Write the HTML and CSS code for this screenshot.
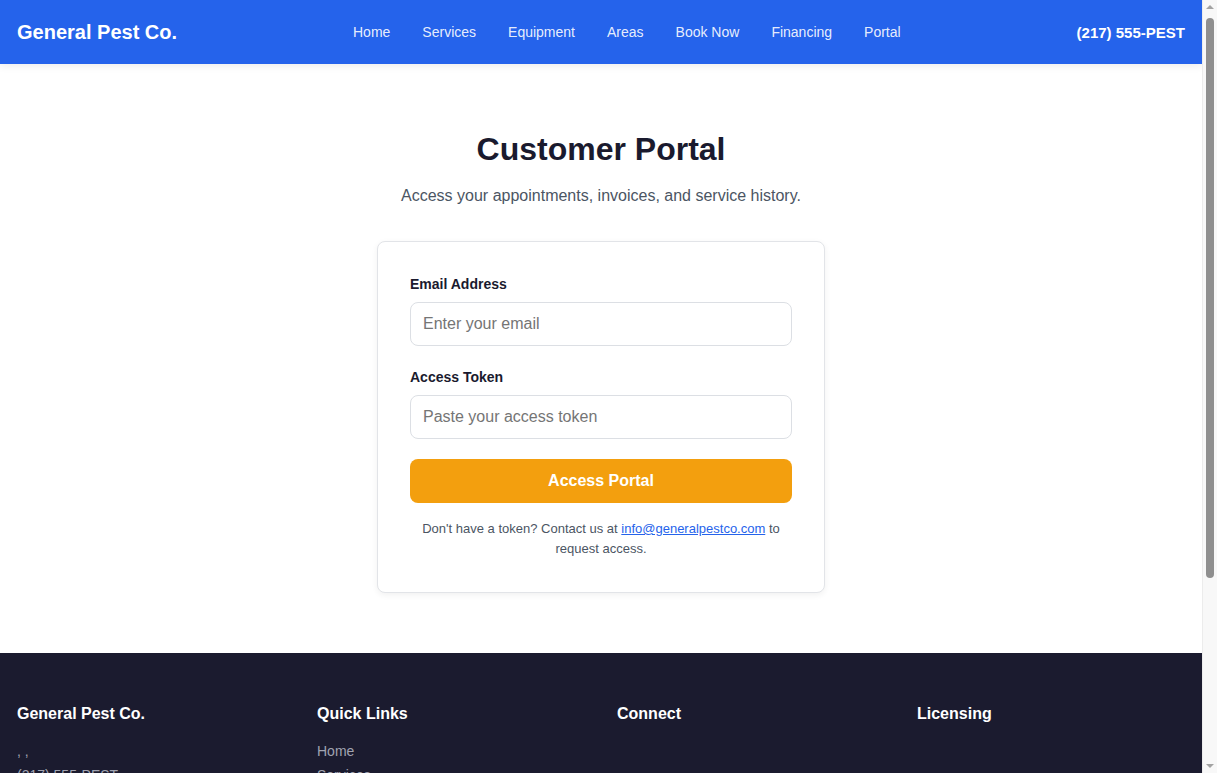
FILE: index.html
```html
<!DOCTYPE html>
<html lang="en">
<head>
<meta charset="utf-8">
<title>Customer Portal - General Pest Co.</title>
<link rel="stylesheet" href="styles.css">
</head>
<body>
<header class="site-header">
  <a class="logo" href="#">General Pest Co.</a>
  <nav class="main-nav">
    <a href="#">Home</a>
    <a href="#">Services</a>
    <a href="#">Equipment</a>
    <a href="#">Areas</a>
    <a href="#">Book Now</a>
    <a href="#">Financing</a>
    <a href="#">Portal</a>
  </nav>
  <a class="phone" href="#">(217) 555-PEST</a>
</header>

<main class="portal">
  <h1 class="portal-title">Customer Portal</h1>
  <p class="portal-sub">Access your appointments, invoices, and service history.</p>
  <form class="card">
    <div class="field">
      <label class="field-label" for="email">Email Address</label>
      <input class="field-input" id="email" type="email" placeholder="Enter your email">
    </div>
    <div class="field field-last">
      <label class="field-label" for="token">Access Token</label>
      <input class="field-input" id="token" type="text" placeholder="Paste your access token">
    </div>
    <button class="btn-primary" type="button">Access Portal</button>
    <p class="help">Don't have a token? Contact us at <a href="#">info@generalpestco.com</a> to request access.</p>
  </form>
</main>

<footer class="site-footer">
  <div class="footer-grid">
    <div class="footer-col">
      <h3 class="footer-head">General Pest Co.</h3>
      <p class="footer-text">, ,</p>
      <p class="footer-text">(217) 555-PEST</p>
      <p class="footer-text">info@generalpestco.com</p>
    </div>
    <div class="footer-col">
      <h3 class="footer-head">Quick Links</h3>
      <a class="footer-link" href="#">Home</a>
      <a class="footer-link" href="#">Services</a>
      <a class="footer-link" href="#">Book Now</a>
      <a class="footer-link" href="#">Portal</a>
    </div>
    <div class="footer-col">
      <h3 class="footer-head">Connect</h3>
    </div>
    <div class="footer-col">
      <h3 class="footer-head">Licensing</h3>
    </div>
  </div>
  <div class="footer-bottom">&copy; 2024 General Pest Co. All rights reserved.</div>
</footer>

<div class="scrollbar" aria-hidden="true">
  <span class="sb-arrow sb-up"></span>
  <span class="sb-thumb"></span>
  <span class="sb-arrow sb-down"></span>
</div>
</body>
</html>
```

FILE: styles.css
```css
* { box-sizing: border-box; }
html, body { margin: 0; padding: 0; }
body {
  font-family: "Liberation Sans", Arial, sans-serif;
  color: #1a1a2e;
  background: #fff;
  margin-right: 15px;
}
a { text-decoration: none; color: inherit; }

.site-header {
  height: 64px;
  background: #2563eb;
  display: flex;
  align-items: center;
  justify-content: space-between;
  padding: 0 17px;
  box-shadow: 0 2px 8px rgba(0,0,0,0.08);
  position: relative;
}
.logo {
  color: #fff;
  font-size: 20px;
  font-weight: 700;
}
.main-nav {
  display: flex;
  gap: 32px;
}
.main-nav a {
  color: rgba(255,255,255,0.9);
  font-size: 14px;
}
.phone {
  color: #fff;
  font-weight: 700;
  font-size: 15px;
}

.portal {
  padding: 66px 17px 60px;
  display: flex;
  flex-direction: column;
  align-items: center;
}
.portal-title {
  margin: 0 0 15px;
  font-size: 32px;
  line-height: 38px;
  font-weight: 700;
  color: #1a1a2e;
}
.portal-sub {
  margin: 0 0 32px;
  font-size: 16px;
  line-height: 26px;
  color: #4b5563;
}
.card {
  width: 448px;
  border: 1px solid #e2e4e8;
  border-radius: 8px;
  padding: 32px 32px 33px;
  background: #fff;
  box-shadow: 0 2px 6px rgba(0,0,0,0.06);
}
.field { margin-bottom: 21px; }
.field-last { margin-bottom: 20px; }
.field-label {
  display: block;
  font-size: 14px;
  line-height: 21px;
  font-weight: 700;
  color: #1a1a2e;
  margin-bottom: 7px;
}
.field-input {
  display: block;
  width: 100%;
  height: 44px;
  padding: 0 12px;
  font-family: inherit;
  font-size: 16px;
  border: 1px solid #dcdfe4;
  border-radius: 8px;
  color: #1a1a2e;
  outline: none;
}
.field-input::placeholder { color: #757575; }
.btn-primary {
  display: block;
  width: 100%;
  height: 44px;
  border: 0;
  border-radius: 8px;
  background: #f39f0e;
  color: #fff;
  font-family: inherit;
  font-size: 16px;
  font-weight: 700;
  cursor: pointer;
}
.help {
  margin: 16px 0 0;
  text-align: center;
  font-size: 13px;
  line-height: 20px;
  color: #4b5563;
}
.help a {
  color: #2563eb;
  text-decoration: underline;
}

.site-footer {
  background: #1b1b2f;
  color: #fff;
  padding: 49px 17px 40px;
}
.footer-grid {
  display: grid;
  grid-template-columns: repeat(4, 1fr);
  gap: 32px;
}
.footer-col {
  display: flex;
  flex-direction: column;
  align-items: flex-start;
  gap: 4px;
}
.footer-head {
  margin: 0 0 11px;
  font-size: 16px;
  line-height: 24px;
  font-weight: 700;
  color: #fff;
}
.footer-text, .footer-link {
  margin: 0;
  font-size: 14px;
  line-height: 20px;
  color: #a0a3b1;
}
.footer-bottom {
  margin-top: 40px;
  padding-top: 20px;
  border-top: 1px solid #2e2f45;
  font-size: 13px;
  color: #8a8da0;
  text-align: center;
}

/* imitation of the browser's vertical scrollbar seen in the reference */
.scrollbar {
  position: fixed;
  top: 0;
  right: 0;
  width: 15px;
  height: 100vh;
  background: #f8f8f8;
  border-left: 1px solid #ececec;
}
.sb-thumb {
  position: absolute;
  left: 3px;
  top: 18px;
  width: 8px;
  height: 560px;
  border-radius: 4px;
  background: #8f8f8f;
}
.sb-arrow {
  position: absolute;
  left: 3px;
  width: 0;
  height: 0;
  border-left: 4px solid transparent;
  border-right: 4px solid transparent;
}
.sb-up {
  top: 5px;
  border-bottom: 4px solid #a3a3a3;
}
.sb-down {
  bottom: 5px;
  border-top: 4px solid #a3a3a3;
}
```
